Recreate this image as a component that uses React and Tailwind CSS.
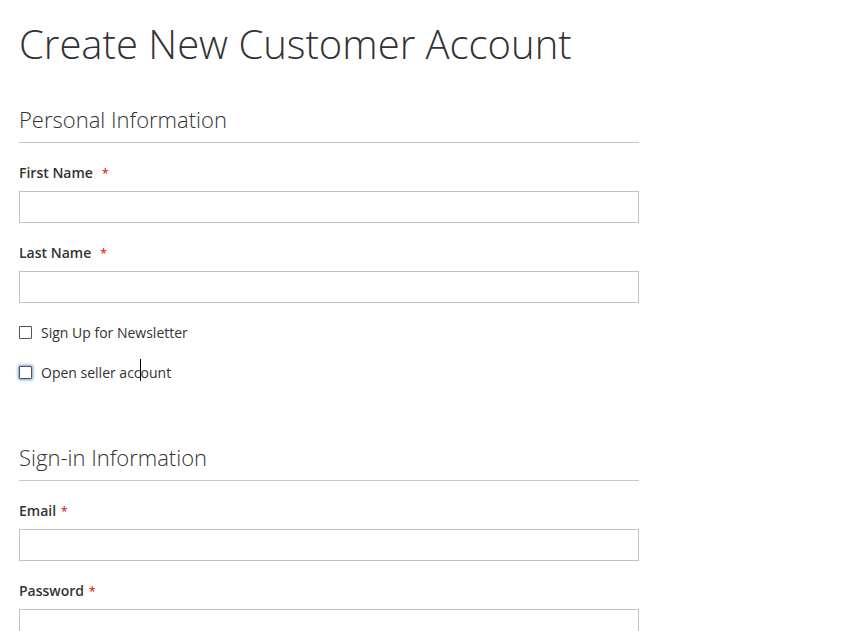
import React from "react";

const Field = ({ label, gap = "ml-[9px]" }) => (
  <div className="mt-5">
    <label className="block h-5 text-[14px] leading-5 font-semibold text-[#333]">
      {label}
      <span className={`${gap} text-[12px] leading-none text-[#e02b27]`}>*</span>
    </label>
    <input
      type="text"
      className="mt-2 block w-full h-8 border border-[#c2c2c2] bg-white outline-none"
    />
  </div>
);

const Legend = ({ children, className = "" }) => (
  <div
    className={`pb-[10px] border-b border-[#c6c6c6] text-[22px] leading-[26px] font-light text-[#333] ${className}`}
  >
    {children}
  </div>
);

const Check = ({ label, focused, children }) => (
  <label className="flex items-center h-5 text-[14px] text-[#333]">
    <span
      className={`w-[13px] h-[13px] border border-[#555] rounded-[1px] bg-white ${
        focused ? "shadow-[0_0_3px_1px_#6a9fd8]" : ""
      }`}
    />
    <span className="relative ml-[9px]">
      {label}
      {children}
    </span>
  </label>
);

const App = () => {
  return (
    <div
      className="min-h-[631px] bg-white pl-[19px]"
      style={{ fontFamily: "'Open Sans', 'Liberation Sans', sans-serif" }}
    >
      <div className="w-[620px]">
        <h1 className="pt-[22px] text-[40px] leading-[44px] font-light text-[#333]">
          Create New Customer Account
        </h1>

        <Legend className="mt-[40px]">Personal Information</Legend>
        <Field label="First Name" />
        <Field label="Last Name" />

        <div className="mt-[19px] flex flex-col gap-5">
          <Check label="Sign Up for Newsletter" />
          <Check label="Open seller account" focused>
            <span className="absolute left-[99px] top-[-3px] w-px h-[22px] bg-black" />
          </Check>
        </div>

        <Legend className="mt-[62px]">Sign-in Information</Legend>
        <Field label="Email" gap="ml-[5px]" />
        <Field label="Password" gap="ml-[5px]" />
      </div>
    </div>
  );
};

export default App;
